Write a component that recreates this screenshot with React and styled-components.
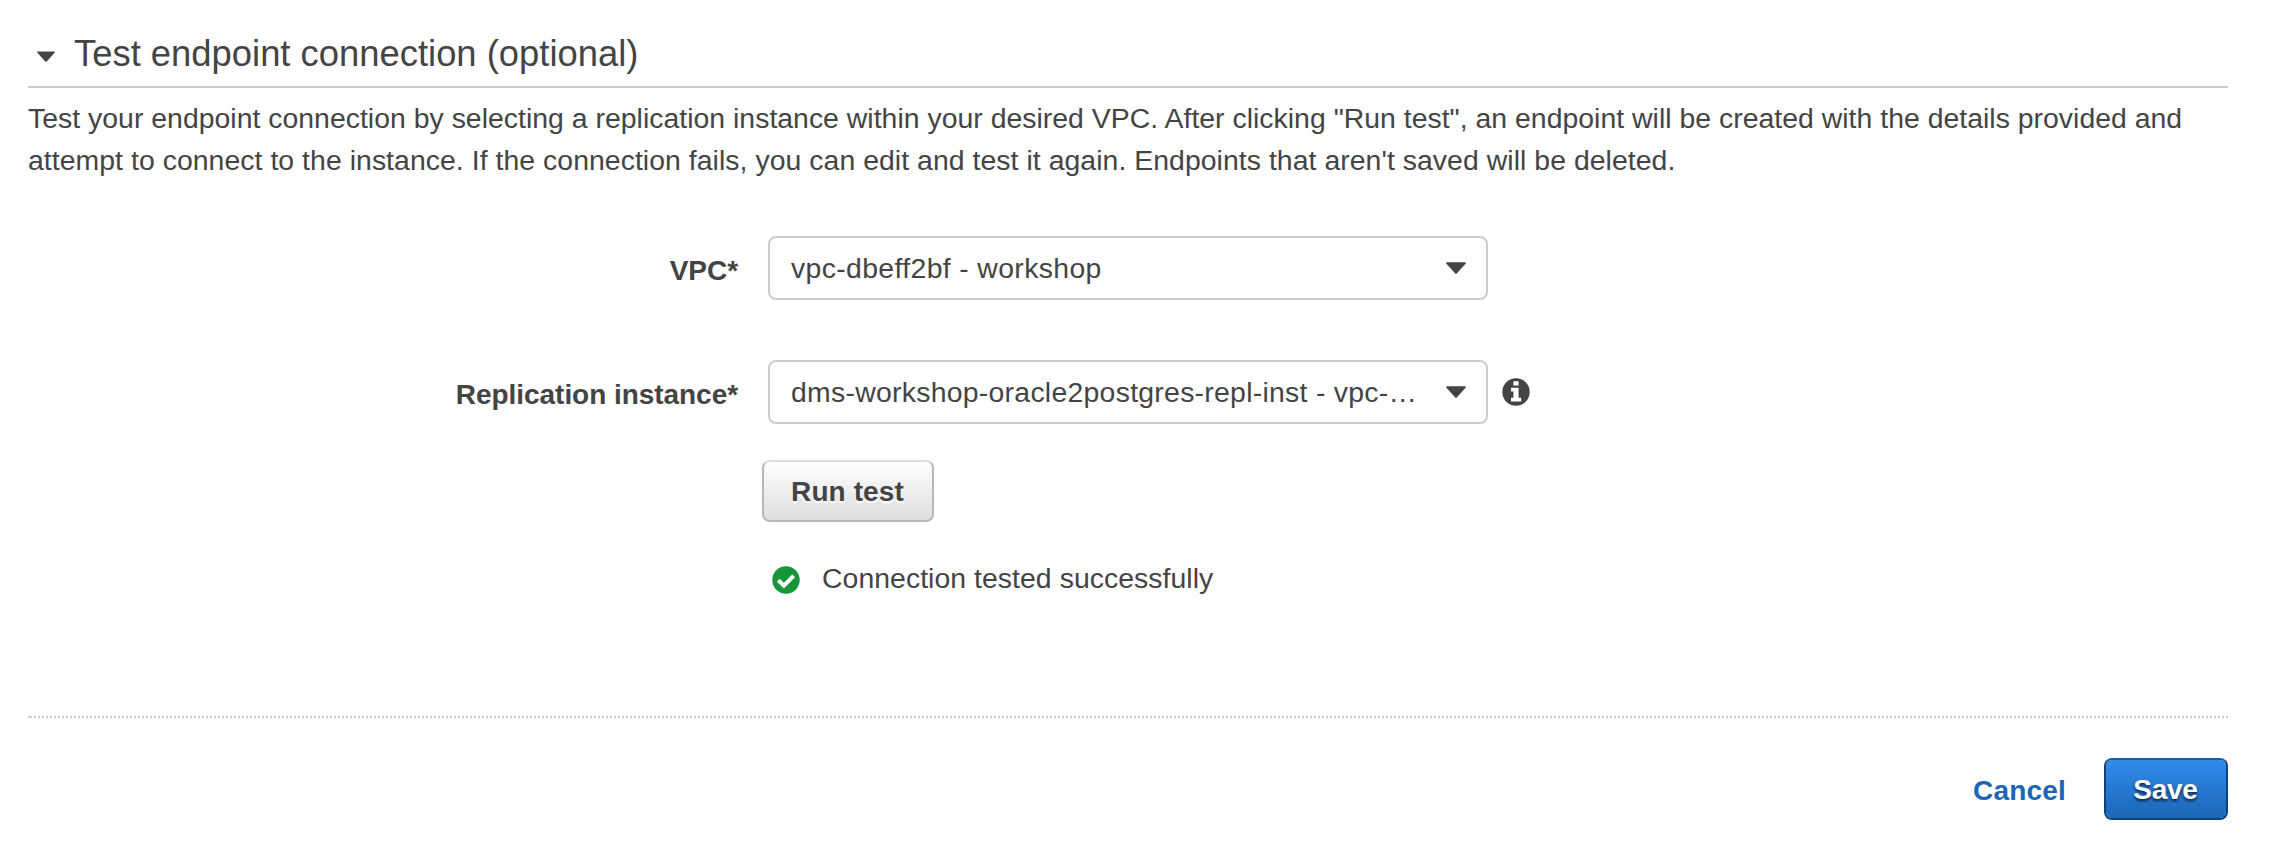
import React from 'react';
import styled, { createGlobalStyle } from 'styled-components';

const GlobalStyle = createGlobalStyle`
  *, *::before, *::after { box-sizing: border-box; }
  body {
    margin: 0;
    background: #fff;
    color: #444;
    font-family: "Liberation Sans", Arial, sans-serif;
    font-size: 28.4px;
    line-height: 42px;
  }
`;

const Page = styled.main`
  width: 2278px;
  height: 856px;
  padding: 33px 50px 0 28px;
`;

const SectionHeader = styled.header`
  display: flex;
  align-items: flex-start;
  height: 55px;
  padding-left: 9px;
  border-bottom: 2px solid #ccc;
`;

const ToggleIcon = styled.svg`
  width: 18px;
  height: 11px;
  margin: 18px 19px 0 0;
  fill: #444;
`;

const SectionTitle = styled.h2`
  margin: 0;
  font-size: 36.4px;
  font-weight: 400;
  line-height: 42px;
`;

const Description = styled.p`
  margin: 9px 0 0;
`;

const Line = styled.span`
  display: block;
  white-space: nowrap;
  letter-spacing: ${({ $tracking }) => $tracking}px;
`;

const Form = styled.div`
  display: flex;
  flex-direction: column;
  gap: 60px;
  margin-top: 55px;
`;

const Field = styled.div`
  display: grid;
  grid-template-columns: 710px 720px auto;
  column-gap: 30px;
  height: 64px;
  align-items: center;
`;

const Label = styled.label`
  padding-top: 5px;
  font-size: 28px;
  font-weight: 700;
  text-align: right;
  letter-spacing: -0.05px;
`;

const Select = styled.div`
  display: flex;
  align-items: center;
  justify-content: space-between;
  height: 64px;
  padding: 0 20px 0 21px;
  border: 2px solid #ccc;
  border-radius: 8px;
  letter-spacing: ${({ $tracking }) => $tracking}px;
  white-space: nowrap;
`;

const SelectValue = styled.span`
  padding-bottom: 1px;
`;

const SelectCaret = styled.svg`
  width: 20px;
  height: 12px;
  fill: #444;
`;

const InfoIcon = styled.svg`
  width: 28px;
  height: 28px;
  margin-left: -16px;
`;

const Results = styled.div`
  display: flex;
  flex-direction: column;
  align-items: flex-start;
  padding: 36px 0 0 734px;
`;

const Button = styled.button`
  height: 62px;
  padding: 2px 1px 0 0;
  border-radius: 8px;
  font: 700 28px/42px "Liberation Sans", Arial, sans-serif;
`;

const RunButton = styled(Button)`
  width: 172px;
  border: 2px solid #b7b7b7;
  border-top-color: #dcdcdc;
  background: linear-gradient(#fff, #ddd) padding-box;
  color: #444;
  letter-spacing: 0.1px;
  text-shadow: 0 2px 2px #fff;
`;

const Status = styled.div`
  display: flex;
  align-items: center;
  gap: 22px;
  margin: 35px 0 0 10px;
  letter-spacing: 0.05px;
`;

const StatusIcon = styled.svg`
  width: 28px;
  height: 28px;
  margin-top: 4px;
`;

const Divider = styled.div`
  height: 2px;
  margin-top: 117px;
  background:
    linear-gradient(#ccc, #ccc) 0 0 / 2px 2px no-repeat,
    repeating-linear-gradient(90deg, transparent 0 2px, #ccc 2px 4px);
`;

const Footer = styled.footer`
  display: flex;
  justify-content: flex-end;
  align-items: center;
  gap: 38px;
  margin-top: 40px;
`;

const CancelLink = styled.a`
  color: #1966b8;
  font-size: 28px;
  font-weight: 700;
  padding-top: 3px;
  letter-spacing: 0.2px;
`;

const SaveButton = styled(Button)`
  width: 124px;
  border: 2px solid #0f4377;
  border-top-color: #165ba8;
  background: linear-gradient(#328ceb, #1b66b7) padding-box;
  color: #fff;
  letter-spacing: -0.25px;
  text-shadow: 0 2px 3px rgba(0, 0, 0, 0.75);
`;

const Caret = () => (
  <SelectCaret viewBox="0 0 20 12">
    <path d="M1 .3h18q1.3.3.6 1.5L11 11.2q-1 1-2 0L.4 1.8Q-.3.6 1 .3Z" />
  </SelectCaret>
);

export default function App() {
  return (
    <>
      <GlobalStyle />
      <Page>
        <SectionHeader>
          <ToggleIcon viewBox="0 0 18 11">
            <path d="M.8.5h16.4q1.2.2.4 1.3L10 10.2q-1 1-2 0L.4 1.8Q-.4.7.8.5Z" />
          </ToggleIcon>
          <SectionTitle>Test endpoint connection (optional)</SectionTitle>
        </SectionHeader>
        <Description>
          <Line $tracking={0.02}>
            Test your endpoint connection by selecting a replication instance within your desired VPC. After clicking "Run test", an endpoint will be created with the details provided and
          </Line>
          <Line $tracking={0.05}>
            attempt to connect to the instance. If the connection fails, you can edit and test it again. Endpoints that aren't saved will be deleted.
          </Line>
        </Description>
        <Form>
          <Field>
            <Label>VPC*</Label>
            <Select $tracking={0.36}>
              <SelectValue>vpc-dbeff2bf - workshop</SelectValue>
              <Caret />
            </Select>
          </Field>
          <Field>
            <Label>Replication instance*</Label>
            <Select $tracking={0.27}>
              <SelectValue>dms-workshop-oracle2postgres-repl-inst - vpc-…</SelectValue>
              <Caret />
            </Select>
            <InfoIcon viewBox="0 0 28 28">
              <circle cx="14" cy="14" r="13.7" fill="#444" />
              <path d="M11.4 3.2h5.2v4.4h-5.2zM9 9.8h7.6v10h2.6v3.6H9v-3.6h2.4v-6.4H9z" fill="#fff" />
            </InfoIcon>
          </Field>
        </Form>
        <Results>
          <RunButton>Run test</RunButton>
          <Status>
            <StatusIcon viewBox="0 0 28 28">
              <circle cx="14" cy="14" r="13.7" fill="#169638" />
              <path d="M6.3 14.2l5.6 5.4 9.7-9.8" fill="none" stroke="#fff" strokeWidth="4" />
            </StatusIcon>
            <span>Connection tested successfully</span>
          </Status>
        </Results>
        <Divider />
        <Footer>
          <CancelLink>Cancel</CancelLink>
          <SaveButton>Save</SaveButton>
        </Footer>
      </Page>
    </>
  );
}
